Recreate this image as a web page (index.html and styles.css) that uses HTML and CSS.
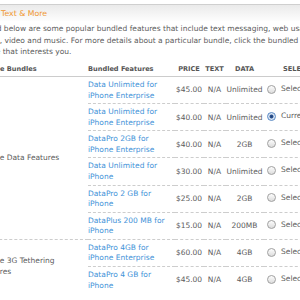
FILE: index.html
```html
<!DOCTYPE html>
<html>
<head>
<meta charset="utf-8">
<link rel="stylesheet" href="styles.css">
</head>
<body>
<div class="page">
  <div class="band"><h2 class="title">Text &amp; More</h2></div>
  <p class="intro">Listed below are some popular bundled features that include text messaging, web usage,<br>email, video and music. For more details about a particular bundle, click the bundled feature<br>name that interests you.</p>
  <table class="bundles">
    <colgroup>
      <col class="c-group"><col class="c-feat"><col class="c-price"><col class="c-text"><col class="c-data"><col class="c-sel">
    </colgroup>
    <thead>
      <tr>
        <th class="left">iPhone Bundles</th>
        <th class="left">Bundled Features</th>
        <th>PRICE</th>
        <th>TEXT</th>
        <th>DATA</th>
        <th class="left sel-h">SELECT</th>
      </tr>
    </thead>
    <tbody>
      <tr>
        <td class="group" rowspan="6">iPhone Data Features</td>
        <td class="feat"><a href="#">Data Unlimited for iPhone Enterprise</a></td>
        <td>$45.00</td><td>N/A</td><td>Unlimited</td>
        <td class="sel"><span class="opt"><span class="radio"></span>Select</span></td>
      </tr>
      <tr>
        <td class="feat"><a href="#">Data Unlimited for iPhone Enterprise</a></td>
        <td>$40.00</td><td>N/A</td><td>Unlimited</td>
        <td class="sel"><span class="opt"><span class="radio on"></span>Current</span></td>
      </tr>
      <tr>
        <td class="feat"><a href="#">DataPro 2GB for iPhone Enterprise</a></td>
        <td>$40.00</td><td>N/A</td><td>2GB</td>
        <td class="sel"><span class="opt"><span class="radio"></span>Select</span></td>
      </tr>
      <tr>
        <td class="feat"><a href="#">Data Unlimited for iPhone</a></td>
        <td>$30.00</td><td>N/A</td><td>Unlimited</td>
        <td class="sel"><span class="opt"><span class="radio"></span>Select</span></td>
      </tr>
      <tr>
        <td class="feat"><a href="#">DataPro 2 GB for iPhone</a></td>
        <td>$25.00</td><td>N/A</td><td>2GB</td>
        <td class="sel"><span class="opt"><span class="radio"></span>Select</span></td>
      </tr>
      <tr>
        <td class="feat"><a href="#">DataPlus 200 MB for iPhone</a></td>
        <td>$15.00</td><td>N/A</td><td>200MB</td>
        <td class="sel"><span class="opt"><span class="radio"></span>Select</span></td>
      </tr>
      <tr>
        <td class="group last" rowspan="2">iPhone 3G Tethering Features</td>
        <td class="feat"><a href="#">DataPro 4GB for iPhone Enterprise</a></td>
        <td>$60.00</td><td>N/A</td><td>4GB</td>
        <td class="sel"><span class="opt"><span class="radio"></span>Select</span></td>
      </tr>
      <tr class="last">
        <td class="feat"><a href="#">DataPro 4 GB for iPhone</a></td>
        <td>$45.00</td><td>N/A</td><td>4GB</td>
        <td class="sel"><span class="opt"><span class="radio"></span>Select</span></td>
      </tr>
    </tbody>
  </table>
</div>
</body>
</html>
```
FILE: styles.css
```css
html, body {
  margin: 0;
  padding: 0;
  overflow: hidden;
  background: #fff;
}
body {
  font-family: "DejaVu Sans", Verdana, sans-serif;
  font-size: 7.5px;
  color: #5c5c5c;
}
.page {
  margin-left: -21px;
  width: 380px;
}
.band {
  margin-top: 4px;
  border-top: 1px solid #cfcfcf;
  height: 16px;
  background: linear-gradient(#eaeaea, #fdfdfd);
  display: flex;
  align-items: center;
  padding-left: 22px;
}
.title {
  margin: 0;
  font-size: 7.8px;
  font-weight: normal;
  color: #f0962e;
}
.intro {
  margin: 2px 0 0;
  line-height: 11.7px;
  white-space: nowrap;
}
.bundles {
  margin-top: 4px;
  border-collapse: separate;
  border-spacing: 0;
  table-layout: fixed;
  width: 364.5px;
}
.c-group { width: 109px; }
.c-feat { width: 86.5px; }
.c-price { width: 29px; }
.c-text { width: 22px; }
.c-data { width: 38px; }
.c-sel { width: 80px; }
th {
  height: 14px;
  padding: 0;
  font-size: 6.6px;
  font-weight: bold;
  color: #555;
  border-bottom: 1px solid #ccc;
  text-align: center;
  vertical-align: middle;
  white-space: nowrap;
}
th.left { text-align: left; }
th.sel-h { padding-left: 19.5px; }
td {
  padding: 3px 0 2px;
  line-height: 10.57px;
  border-bottom: 1px dashed #cdcdcd;
  text-align: center;
  vertical-align: middle;
  white-space: nowrap;
}
td.group {
  text-align: left;
  white-space: normal;
  padding-right: 20px;
}
td.feat {
  text-align: left;
  white-space: normal;
}
td.feat a {
  color: #4292d8;
  text-decoration: none;
}
tr.last td, td.group.last { border-bottom: none; }
td.sel {
  text-align: left;
  padding-left: 3.5px;
}
.opt {
  display: inline-flex;
  align-items: center;
  gap: 5px;
}
.radio {
  width: 7px;
  height: 7px;
  border: 1px solid #a0a0a0;
  border-radius: 50%;
  background: linear-gradient(#fdfdfd, #dcdcdc);
  box-sizing: content-box;
}
.radio.on {
  border-color: #5a8ac4;
  background: radial-gradient(circle, #1f3f78 0, #2c5592 1.6px, #dfe9f6 2.4px, #c9d9ee 100%);
}
```
